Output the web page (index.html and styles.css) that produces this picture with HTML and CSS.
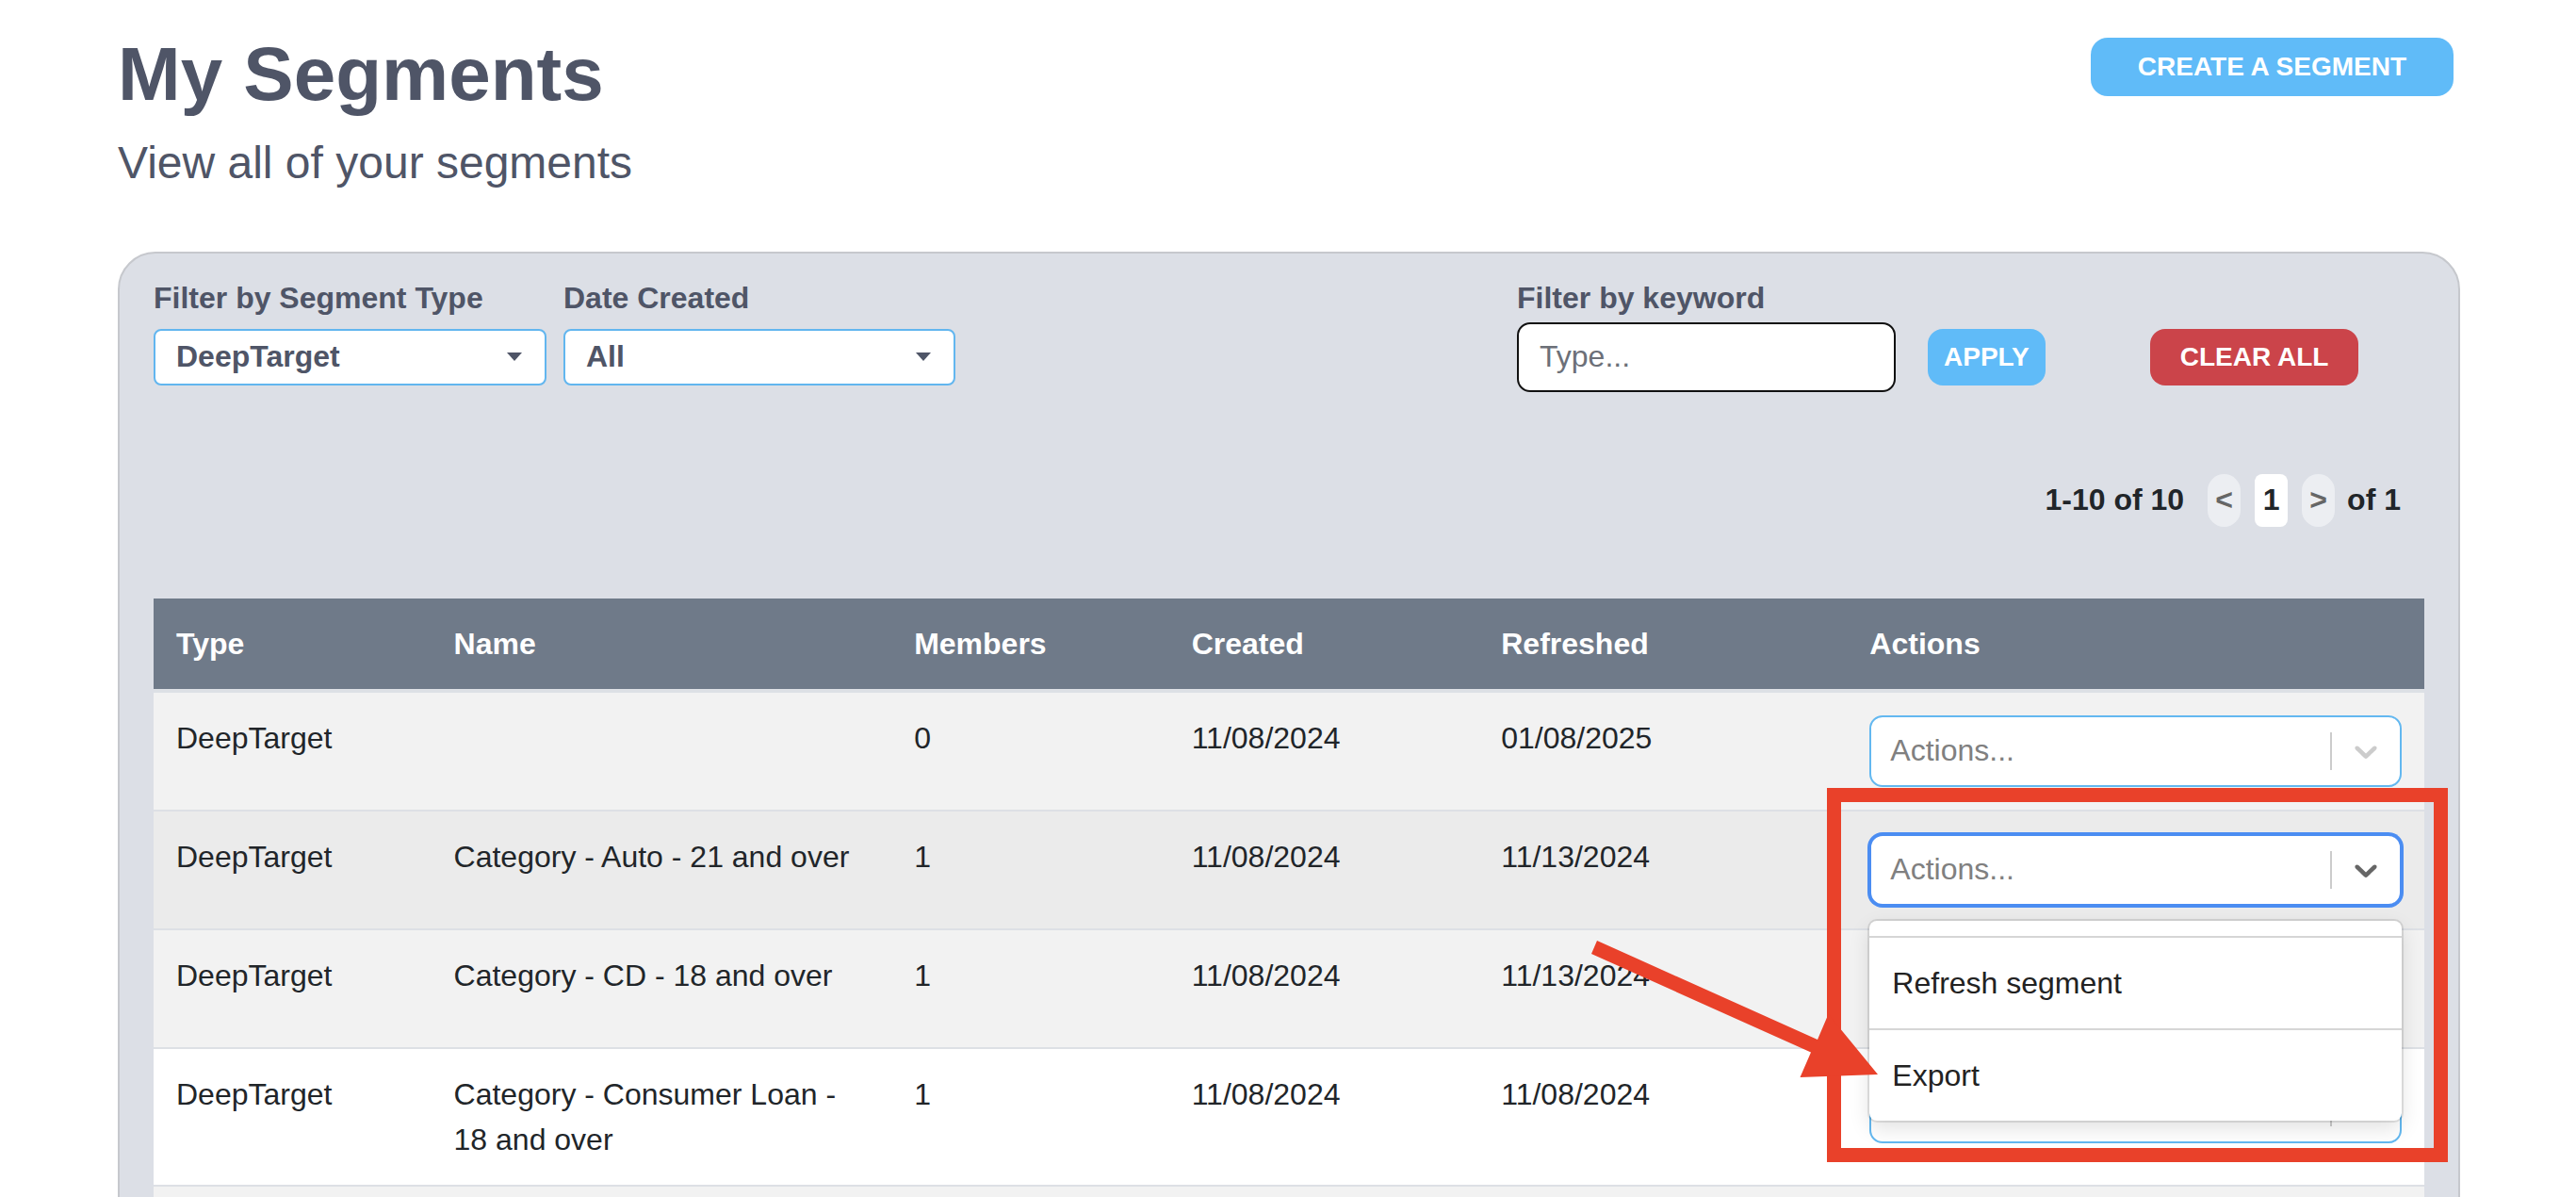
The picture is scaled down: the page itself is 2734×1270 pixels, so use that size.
FILE: index.html
```html
<!DOCTYPE html>
<html lang="en">
<head>
    <meta charset="UTF-8">
    <meta name="viewport" content="width=device-width, initial-scale=1.0">
    <title>My Segments</title>
    <link rel="stylesheet" href="styles.css">
</head>
<body>
    <div class="page">
        <header class="page-header">
            <div>
                <h1 class="page-title">My Segments</h1>
                <p class="page-subtitle">View all of your segments</p>
            </div>
            <button class="btn btn-blue btn-create">CREATE A SEGMENT</button>
        </header>

        <section class="segments-panel">
            <div class="filters">
                <label class="filter-label label-type">Filter by Segment Type</label>
                <label class="filter-label label-date">Date Created</label>
                <label class="filter-label label-keyword">Filter by keyword</label>

                <div class="filter-select select-type">
                    <span>DeepTarget</span>
                    <svg width="16" height="9" viewBox="0 0 16 9"><path d="M0 0h16L8 9z"/></svg>
                </div>
                <div class="filter-select select-date">
                    <span>All</span>
                    <svg width="16" height="9" viewBox="0 0 16 9"><path d="M0 0h16L8 9z"/></svg>
                </div>
                <input class="keyword-input" type="text" placeholder="Type...">
                <button class="btn btn-blue btn-apply">APPLY</button>
                <button class="btn btn-red btn-clear">CLEAR ALL</button>
            </div>

            <div class="pagination">
                <span class="pagination-text">1-10 of 10</span>
                <button class="page-nav page-prev">&lt;</button>
                <span class="page-current">1</span>
                <button class="page-nav">&gt;</button>
                <span class="pagination-text page-total">of 1</span>
            </div>

            <table class="segments-table">
                <colgroup>
                    <col class="col-type">
                    <col class="col-name">
                    <col class="col-members">
                    <col class="col-created">
                    <col class="col-refreshed">
                    <col class="col-actions">
                </colgroup>
                <thead>
                    <tr>
                        <th>Type</th>
                        <th>Name</th>
                        <th>Members</th>
                        <th>Created</th>
                        <th>Refreshed</th>
                        <th>Actions</th>
                    </tr>
                </thead>
                <tbody>
                    <tr>
                        <td>DeepTarget</td>
                        <td></td>
                        <td>0</td>
                        <td>11/08/2024</td>
                        <td>01/08/2025</td>
                        <td>
                            <div class="action-select">
                                <div class="action-control">
                                    <span class="action-placeholder">Actions...</span>
                                    <span class="action-separator"></span>
                                    <span class="action-indicator"><svg viewBox="0 0 20 20"><path d="M4.516 7.548c0.436-0.446 1.043-0.481 1.576 0l3.908 3.747 3.908-3.747c0.533-0.481 1.141-0.446 1.574 0 0.436 0.445 0.408 1.197 0 1.615-0.406 0.418-4.695 4.502-4.695 4.502-0.217 0.223-0.502 0.335-0.787 0.335s-0.57-0.112-0.789-0.335c0 0-4.287-4.084-4.695-4.502s-0.436-1.17 0-1.615z"/></svg></span>
                                </div>
                            </div>
                        </td>
                    </tr>
                    <tr class="is-hovered">
                        <td>DeepTarget</td>
                        <td>Category - Auto - 21 and over</td>
                        <td>1</td>
                        <td>11/08/2024</td>
                        <td>11/13/2024</td>
                        <td>
                            <div class="action-select">
                                <div class="action-control is-focused">
                                    <span class="action-placeholder">Actions...</span>
                                    <span class="action-separator"></span>
                                    <span class="action-indicator"><svg viewBox="0 0 20 20"><path d="M4.516 7.548c0.436-0.446 1.043-0.481 1.576 0l3.908 3.747 3.908-3.747c0.533-0.481 1.141-0.446 1.574 0 0.436 0.445 0.408 1.197 0 1.615-0.406 0.418-4.695 4.502-4.695 4.502-0.217 0.223-0.502 0.335-0.787 0.335s-0.57-0.112-0.789-0.335c0 0-4.287-4.084-4.695-4.502s-0.436-1.17 0-1.615z"/></svg></span>
                                </div>
                                <div class="action-menu">
                                    <div class="action-menu-list">
                                        <div class="action-option">Edit segment</div>
                                        <div class="action-option">Refresh segment</div>
                                        <div class="action-option">Export</div>
                                    </div>
                                </div>
                            </div>
                        </td>
                    </tr>
                    <tr>
                        <td>DeepTarget</td>
                        <td>Category - CD - 18 and over</td>
                        <td>1</td>
                        <td>11/08/2024</td>
                        <td>11/13/2024</td>
                        <td>
                            <div class="action-select">
                                <div class="action-control">
                                    <span class="action-placeholder">Actions...</span>
                                    <span class="action-separator"></span>
                                    <span class="action-indicator"><svg viewBox="0 0 20 20"><path d="M4.516 7.548c0.436-0.446 1.043-0.481 1.576 0l3.908 3.747 3.908-3.747c0.533-0.481 1.141-0.446 1.574 0 0.436 0.445 0.408 1.197 0 1.615-0.406 0.418-4.695 4.502-4.695 4.502-0.217 0.223-0.502 0.335-0.787 0.335s-0.57-0.112-0.789-0.335c0 0-4.287-4.084-4.695-4.502s-0.436-1.17 0-1.615z"/></svg></span>
                                </div>
                            </div>
                        </td>
                    </tr>
                    <tr>
                        <td>DeepTarget</td>
                        <td>Category - Consumer Loan - 18 and over</td>
                        <td>1</td>
                        <td>11/08/2024</td>
                        <td>11/08/2024</td>
                        <td>
                            <div class="action-select">
                                <div class="action-control">
                                    <span class="action-placeholder">Actions...</span>
                                    <span class="action-separator"></span>
                                    <span class="action-indicator"><svg viewBox="0 0 20 20"><path d="M4.516 7.548c0.436-0.446 1.043-0.481 1.576 0l3.908 3.747 3.908-3.747c0.533-0.481 1.141-0.446 1.574 0 0.436 0.445 0.408 1.197 0 1.615-0.406 0.418-4.695 4.502-4.695 4.502-0.217 0.223-0.502 0.335-0.787 0.335s-0.57-0.112-0.789-0.335c0 0-4.287-4.084-4.695-4.502s-0.436-1.17 0-1.615z"/></svg></span>
                                </div>
                            </div>
                        </td>
                    </tr>
                    <tr>
                        <td>DeepTarget</td>
                        <td>Category - Deposit - 18 and over</td>
                        <td>1</td>
                        <td>11/08/2024</td>
                        <td>11/08/2024</td>
                        <td>
                            <div class="action-select">
                                <div class="action-control">
                                    <span class="action-placeholder">Actions...</span>
                                    <span class="action-separator"></span>
                                    <span class="action-indicator"><svg viewBox="0 0 20 20"><path d="M4.516 7.548c0.436-0.446 1.043-0.481 1.576 0l3.908 3.747 3.908-3.747c0.533-0.481 1.141-0.446 1.574 0 0.436 0.445 0.408 1.197 0 1.615-0.406 0.418-4.695 4.502-4.695 4.502-0.217 0.223-0.502 0.335-0.787 0.335s-0.57-0.112-0.789-0.335c0 0-4.287-4.084-4.695-4.502s-0.436-1.17 0-1.615z"/></svg></span>
                                </div>
                            </div>
                        </td>
                    </tr>
                </tbody>
            </table>
        </section>
    </div>

    <!-- screenshot annotation -->
    <svg class="annotation" width="2734" height="1270" viewBox="0 0 2734 1270">
        <rect x="1946.5" y="843.5" width="644" height="382" fill="none" stroke="#e9412a" stroke-width="15"/>
        <polygon fill="#e9412a" points="1695,998 1929,1103 1940.5,1076 1993,1140 1910.5,1143 1922,1116.5 1689,1012"/>
    </svg>

    <script>
        document.querySelectorAll('.action-menu-list').forEach(function (list) {
            list.scrollTop = list.scrollHeight;
        });
    </script>
</body>
</html>
```

FILE: styles.css
```css
* {
    margin: 0;
    padding: 0;
    box-sizing: border-box;
}

html,
body {
    height: 100%;
    overflow: hidden;
}

body {
    position: relative;
    font-family: "Liberation Sans", Arial, Helvetica, sans-serif;
    font-size: 32px;
    color: #212529;
    background: #fff;
}

.page {
    padding: 31px 123px 0 125px;
}

/* header */

.page-header {
    display: flex;
    justify-content: space-between;
    align-items: flex-start;
}

.page-title {
    font-size: 80px;
    line-height: 96px;
    font-weight: bold;
    color: #4f5567;
}

.page-subtitle {
    margin-top: 17px;
    font-size: 48px;
    line-height: 57.6px;
    color: #4f5567;
}

.btn {
    display: inline-flex;
    align-items: center;
    justify-content: center;
    height: 60px;
    border: none;
    border-radius: 16px;
    color: #fff;
    font-family: inherit;
    font-size: 28px;
    font-weight: bold;
    cursor: pointer;
}

.btn-blue {
    background: #60bbf8;
}

.btn-red {
    background: #cb444a;
}

.btn-create {
    height: 62px;
    margin-top: 9px;
    margin-right: 7px;
    padding: 0 50px;
    border-radius: 18px;
}

/* panel */

.segments-panel {
    margin-top: 65px;
    padding: 29px 36px 36px;
    background: #dcdfe6;
    border: 2px solid #c6c8cd;
    border-radius: 40px;
}

.filters {
    display: grid;
    grid-template-columns: 417px 416px 560px 402px auto auto;
    grid-template-areas:
        "l-type l-date . l-key . ."
        "type date . key apply clear";
    column-gap: 18px;
    row-gap: 7px;
    align-items: center;
    justify-content: start;
}

.filter-label {
    font-size: 32px;
    font-weight: bold;
    color: #4f5567;
}

.label-type { grid-area: l-type; }
.label-date { grid-area: l-date; }
.label-keyword { grid-area: l-key; }
.select-type { grid-area: type; }
.select-date { grid-area: date; }
.keyword-input { grid-area: key; }
.btn-apply { grid-area: apply; }
.btn-clear { grid-area: clear; }

.filter-select {
    display: flex;
    justify-content: space-between;
    align-items: center;
    height: 60px;
    padding: 0 24px 0 22px;
    background: #fff;
    border: 2px solid #62b6ef;
    border-radius: 8px;
    font-size: 32px;
    font-weight: bold;
    color: #4f5567;
}

.filter-select svg {
    fill: #4f5567;
}

.keyword-input {
    width: 402px;
    height: 74px;
    padding: 0 22px;
    border: 2px solid #111;
    border-radius: 14px;
    font-family: inherit;
    font-size: 32px;
    color: #212529;
}

.keyword-input::placeholder {
    color: #6c7078;
}

.btn-apply {
    margin-left: 16px;
    padding: 0 17px;
}

.btn-clear {
    margin-left: 93px;
    padding: 0 32px;
}

/* pagination */

.pagination {
    display: flex;
    justify-content: flex-end;
    align-items: center;
    gap: 15px;
    margin-top: 87px;
    padding-right: 25px;
}

.pagination-text {
    font-size: 32px;
    font-weight: bold;
    color: #212529;
}

.page-prev {
    margin-left: 10px;
}

.page-total {
    margin-left: -2px;
}

.page-nav,
.page-current {
    display: flex;
    align-items: center;
    justify-content: center;
    width: 35px;
    height: 56px;
    border: none;
    font-family: inherit;
    font-size: 32px;
    font-weight: bold;
}

.page-nav {
    border-radius: 18px;
    background: #eceef2;
    color: #666;
}

.page-current {
    border-radius: 8px;
    background: #fff;
    color: #212529;
}

/* table */

.segments-table {
    width: 100%;
    margin-top: 76px;
    table-layout: fixed;
    border-collapse: separate;
    border-spacing: 0;
}

.col-type { width: 294.5px; }
.col-name { width: 488.5px; }
.col-members { width: 294.5px; }
.col-created { width: 328.5px; }
.col-refreshed { width: 391px; }
.col-actions { width: 612.5px; }

.segments-table th {
    padding: 24px;
    line-height: 48px;
    text-align: left;
    font-weight: bold;
    color: #fff;
    background: #6f7a89;
    border-bottom: 4px solid #dde0e5;
}

.segments-table td {
    padding: 24px;
    line-height: 48px;
    vertical-align: top;
    border-bottom: 2px solid #dde0e5;
}

.segments-table tbody tr {
    background: #fff;
}

.segments-table tbody tr:nth-child(odd) {
    background: #f2f2f2;
}

.segments-table tbody tr.is-hovered {
    background: #ebebeb;
}

/* actions dropdown */

.action-select {
    position: relative;
}

.action-control {
    display: flex;
    align-items: center;
    height: 76px;
    padding-left: 20px;
    background: #fff;
    border: 2px solid #63b8f0;
    border-radius: 14px;
}

.action-control.is-focused {
    border-color: #4b8df2;
    box-shadow: 0 0 0 2px #4b8df2;
}

.action-placeholder {
    flex: 1;
    line-height: normal;
    color: #808080;
}

.action-separator {
    width: 2px;
    height: 40px;
    background: #ccc;
}

.action-indicator {
    display: flex;
    padding: 16px;
}

.action-indicator svg {
    width: 40px;
    height: 40px;
    fill: #ccc;
}

.is-focused .action-indicator svg {
    fill: #666;
}

.action-menu {
    position: absolute;
    top: calc(100% + 16px);
    left: 0;
    right: 0;
    z-index: 5;
    background: #fff;
    border-radius: 8px;
    box-shadow: 0 0 0 2px rgba(0, 0, 0, 0.1), 0 8px 22px rgba(0, 0, 0, 0.12);
    overflow: hidden;
}

.action-menu-list {
    height: 212px;
    overflow: hidden;
}

.action-option {
    padding: 24px;
    line-height: 48px;
    color: #222;
    border-bottom: 2px solid #d6d6d6;
}

.action-option:last-child {
    border-bottom: none;
}

.annotation {
    position: absolute;
    top: 0;
    left: 0;
    z-index: 10;
    pointer-events: none;
}
```
